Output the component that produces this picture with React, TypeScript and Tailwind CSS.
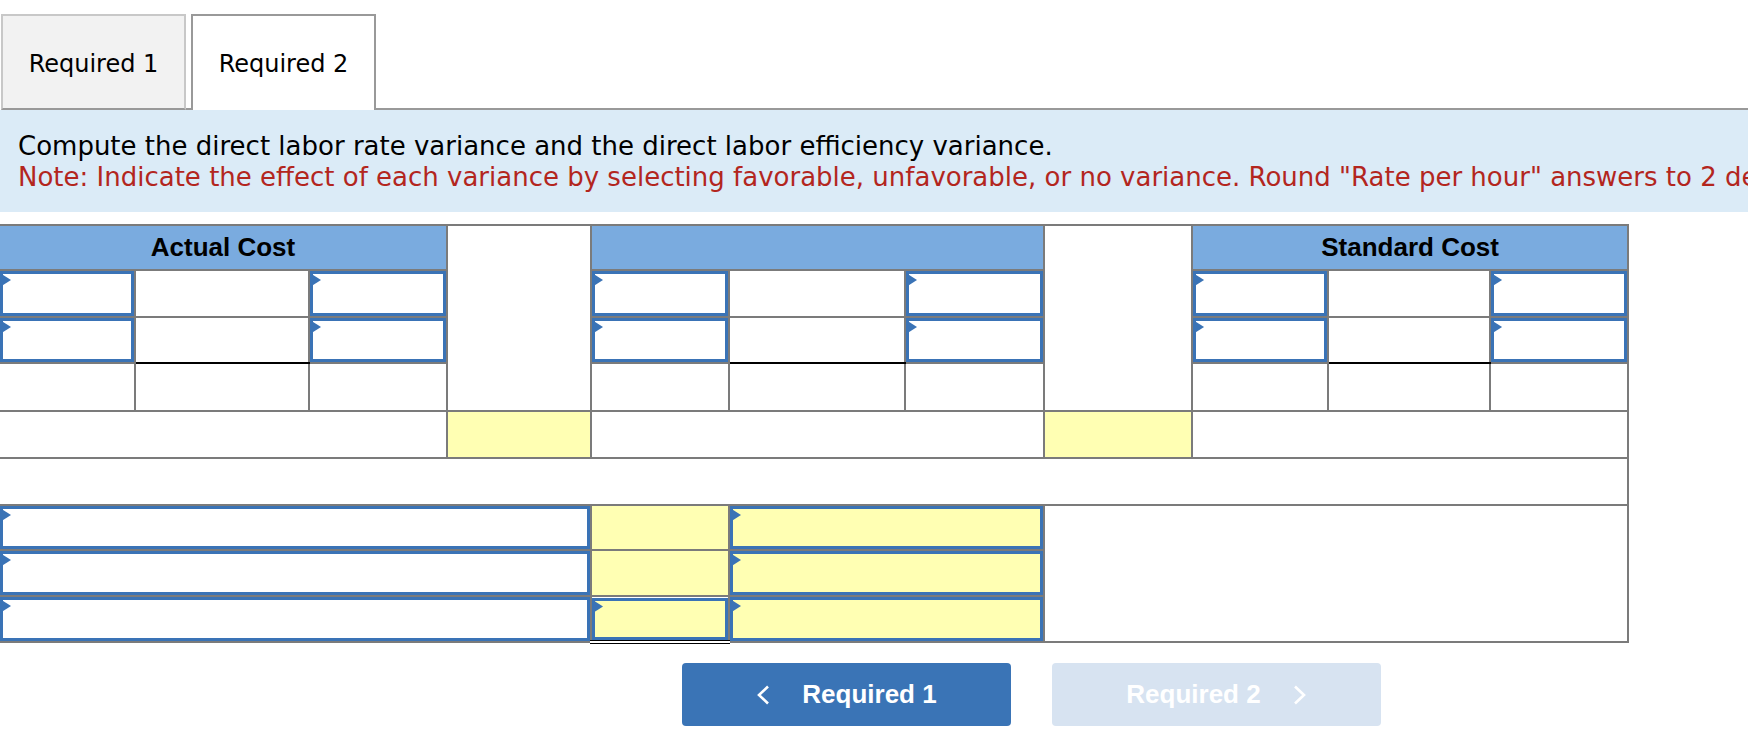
import clsx from 'clsx';

const cell = 'border-2 border-[#7b7b7b] p-0';

// small blue flag shown on entry cells
function Marker() {
  return (
    <span className="absolute -left-[3px] -top-px block h-[14px] w-[11px] bg-[#3a73b6] [clip-path:polygon(0_0,100%_50%,0_100%)]" />
  );
}

function Entry({ yellow = false, h = 'h-[44px]' }: { yellow?: boolean; h?: string }) {
  return (
    <div
      className={clsx(
        'relative border-[3px] border-[#3a73b6]',
        h,
        yellow ? 'bg-[#ffffb3]' : 'bg-white'
      )}
    >
      <Marker />
    </div>
  );
}

function Blank({ h = 'h-[44px]' }: { h?: string }) {
  return <div className={h} />;
}

function EntryRow({ h, underline }: { h: string; underline?: boolean }) {
  const group = (k: string) => [
    <td key={k + 'a'} className={cell}>
      <Entry h={h} />
    </td>,
    <td key={k + 'b'} className={clsx(cell, underline && 'border-b-black')}>
      <Blank h={h} />
    </td>,
    <td key={k + 'c'} className={cell}>
      <Entry h={h} />
    </td>,
  ];
  return <tr>{[...group('l'), ...group('m'), ...group('r')]}</tr>;
}

export default function App() {
  const cols = [
    'w-[136px]',
    'w-[174px]',
    'w-[138px]',
    'w-[144px]',
    'w-[138px]',
    'w-[176px]',
    'w-[139px]',
    'w-[148px]',
    'w-[136px]',
    'w-[162px]',
    'w-[138px]',
  ];

  return (
    <div className="h-[736px] w-[1748px] overflow-hidden bg-white pt-[14px] font-['DejaVu_Sans',sans-serif] text-black">
      {/* tabs */}
      <div className="flex h-[96px]">
        <div className="ml-px flex w-[185px] items-center justify-center border-x-2 border-t-2 border-x-[#c8c8c8] border-t-[#c8c8c8] border-b-2 border-b-[#999] bg-[#f2f2f2] pt-[4px] text-[24px]">
          Required 1
        </div>
        <div className="w-[5px] border-b-2 border-[#999]" />
        <div className="flex w-[185px] items-center justify-center border-x-2 border-t-2 border-[#999] bg-white pt-[2px] text-[24px]">
          Required 2
        </div>
        <div className="flex-1 border-b-2 border-[#999]" />
      </div>

      {/* instructions */}
      <div className="overflow-hidden whitespace-nowrap bg-[#dbebf7] pb-[19px] pl-[18px] pt-[21px] text-[26px] leading-[31px]">
        <div>Compute the direct labor rate variance and the direct labor efficiency variance.</div>
        <div className="text-[#b3261e]">
          Note: Indicate the effect of each variance by selecting favorable, unfavorable, or no variance. Round "Rate per hour" answers to 2 decimal places.
        </div>
      </div>

      {/* worksheet */}
      <table className="-ml-[2px] mt-[12px] w-[1629px] table-fixed border-collapse font-['Liberation_Sans',Arial,sans-serif]">
        <colgroup>
          {cols.map((c, i) => (
            <col key={i} className={c} />
          ))}
        </colgroup>
        <tbody>
          <tr>
            <td colSpan={3} className={clsx(cell, 'bg-[#7aabdf]')}>
              <div className="flex h-[43px] items-center justify-center text-[26px] font-bold">Actual Cost</div>
            </td>
            <td rowSpan={4} className={cell} />
            <td colSpan={3} className={clsx(cell, 'bg-[#7aabdf]')}>
              <div className="h-[43px]" />
            </td>
            <td rowSpan={4} className={cell} />
            <td colSpan={3} className={clsx(cell, 'bg-[#7aabdf]')}>
              <div className="flex h-[43px] items-center justify-center text-[26px] font-bold">Standard Cost</div>
            </td>
          </tr>
          <EntryRow h="h-[45px]" />
          <EntryRow h="h-[44px]" underline />
          <tr>
            {Array.from({ length: 9 }).map((_, i) => (
              <td key={i} className={cell}>
                <Blank h="h-[46px]" />
              </td>
            ))}
          </tr>
          <tr>
            <td colSpan={3} className={cell}>
              <Blank h="h-[45px]" />
            </td>
            <td className={clsx(cell, 'bg-[#ffffb3]')} />
            <td colSpan={3} className={cell} />
            <td className={clsx(cell, 'bg-[#ffffb3]')} />
            <td colSpan={3} className={cell} />
          </tr>
          <tr>
            <td colSpan={11} className={cell}>
              <Blank h="h-[45px]" />
            </td>
          </tr>
          <tr>
            <td colSpan={4} className={cell}>
              <Entry h="h-[43px]" />
            </td>
            <td className={clsx(cell, 'bg-[#ffffb3]')} />
            <td colSpan={2} className={cell}>
              <Entry yellow h="h-[43px]" />
            </td>
            <td colSpan={4} rowSpan={3} className={cell} />
          </tr>
          <tr>
            <td colSpan={4} className={cell}>
              <Entry h="h-[44px]" />
            </td>
            <td className={clsx(cell, 'border-b-black bg-[#ffffb3]')} />
            <td colSpan={2} className={cell}>
              <Entry yellow h="h-[44px]" />
            </td>
          </tr>
          <tr>
            <td colSpan={4} className={cell}>
              <Entry h="h-[44px]" />
            </td>
            <td className={clsx(cell, 'border-b-4 border-double border-b-black')}>
              <Entry yellow h="h-[42px]" />
            </td>
            <td colSpan={2} className={cell}>
              <Entry yellow h="h-[44px]" />
            </td>
          </tr>
        </tbody>
      </table>

      {/* navigation */}
      <div className="mt-[19px] flex gap-[41px] pl-[682px] font-['Liberation_Sans',Arial,sans-serif]">
        <button className="flex h-[63px] w-[329px] items-center justify-center gap-[32px] rounded-[4px] bg-[#3a74b6] text-[26px] font-bold text-white">
          <svg width="14" height="20" viewBox="0 0 14 20" fill="none" stroke="currentColor" strokeWidth="2.6">
            <polyline points="12,1.5 3,10 12,18.5" />
          </svg>
          <span>Required 1</span>
        </button>
        <button className="flex h-[63px] w-[329px] items-center justify-center gap-[32px] rounded-[4px] bg-[#d7e3f1] text-[26px] font-bold text-white">
          <span>Required 2</span>
          <svg width="14" height="20" viewBox="0 0 14 20" fill="none" stroke="currentColor" strokeWidth="2.6">
            <polyline points="2,1.5 11,10 2,18.5" />
          </svg>
        </button>
      </div>
    </div>
  );
}
